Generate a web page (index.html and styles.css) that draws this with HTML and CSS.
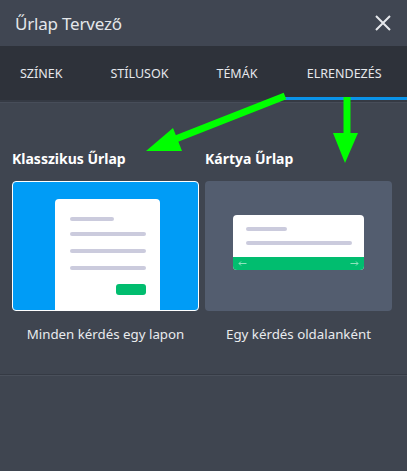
FILE: index.html
```html
<!DOCTYPE html>
<html lang="hu">
<head>
  <meta charset="UTF-8">
  <title>Űrlap Tervező</title>
  <meta name="viewport" content="width=device-width, initial-scale=1">
  <link rel="stylesheet" href="styles.css">
</head>
<body>

  <div class="panel">
    <header class="header">
      <h1 class="title">Űrlap Tervező</h1>
      <button class="close" aria-label="Bezárás">
        <svg width="16" height="16" viewBox="0 0 16 16"><path d="M1 1 L15 15 M15 1 L1 15" stroke="#e6e8ec" stroke-width="2" fill="none"/></svg>
      </button>
    </header>

    <nav class="tabs">
      <div class="tab">SZÍNEK</div>
      <div class="tab">STÍLUSOK</div>
      <div class="tab">TÉMÁK</div>
      <div class="tab active">ELRENDEZÉS</div>
    </nav>

    <section class="layouts">
      <div class="option">
        <h3 class="option-title">Klasszikus Űrlap</h3>
        <div class="preview classic">
          <div class="page">
            <span class="line short"></span>
            <span class="line"></span>
            <span class="line"></span>
            <span class="line"></span>
            <span class="submit"></span>
          </div>
        </div>
        <p class="caption">Minden kérdés egy lapon</p>
      </div>

      <div class="option">
        <h3 class="option-title">Kártya Űrlap</h3>
        <div class="preview cards">
          <div class="mini-card">
            <div class="mini-body">
              <span class="line short"></span>
              <span class="line"></span>
            </div>
            <div class="mini-nav">
              <svg width="9" height="5" viewBox="0 0 9 5"><path d="M8.5 2.5 H1 M3 0.5 L1 2.5 L3 4.5" stroke="#8fe3bd" stroke-width="1" fill="none"/></svg>
              <svg width="9" height="5" viewBox="0 0 9 5"><path d="M0.5 2.5 H8 M6 0.5 L8 2.5 L6 4.5" stroke="#8fe3bd" stroke-width="1" fill="none"/></svg>
            </div>
          </div>
        </div>
        <p class="caption">Egy kérdés oldalanként</p>
      </div>
    </section>

    <div class="footer"></div>

    <svg class="arrows" width="407" height="471" viewBox="0 0 407 471">
      <line x1="285" y1="96" x2="168" y2="142" stroke="#00ff00" stroke-width="7"/>
      <polygon points="146,151 173,128 182,151" fill="#00ff00"/>
      <line x1="347" y1="97" x2="347" y2="136" stroke="#00ff00" stroke-width="7"/>
      <polygon points="333,133 358,133 345,163" fill="#00ff00"/>
    </svg>
  </div>

</body>
</html>
```

FILE: styles.css
```css
body { margin: 0; font-family: "Noto Sans", "Open Sans", sans-serif; background: #3f4550; color: #e9ebee; }
.panel { position: relative; width: 407px; height: 471px; overflow: hidden; background: #3f4550; }

.header { height: 46px; display: flex; align-items: center; justify-content: space-between; padding: 0 16px 0 15px; background: #404652; }
.title { margin: 0; font-size: 17px; font-weight: 400; color: #e4e6ea; letter-spacing: -0.2px; }
.close { background: none; border: none; padding: 0; margin: 0; display: flex; cursor: pointer; }

.tabs { display: flex; height: 51px; background: #2e323a; border-bottom: 3px solid #2e323a; box-shadow: 0 2px 0 #353a44, 0 3px 0 #474d59; }
.tab { padding: 3px 24px 0; display: flex; align-items: center; font-size: 12.5px; color: #e6e8ec; margin-bottom: -3px; border-bottom: 3px solid transparent; }
.tab:first-child { padding-left: 20px; }
.tab.active { border-bottom-color: #0a93e8; flex: 1; justify-content: center; padding: 3px 0 0; }

.layouts { display: grid; grid-template-columns: 187px 187px; gap: 6px; padding: 49px 15px 0 12px; }
.option-title { margin: 0 0 12px; font-size: 14px; font-weight: 700; color: #ffffff; height: 20px; line-height: 20px; }
.preview { height: 130px; border-radius: 4px; box-sizing: border-box; overflow: hidden; }
.caption { margin: 14px 0 0; text-align: center; font-size: 13.3px; color: #e9ebee; }

.classic { background: #009cf6; border: 1px solid #ffffff; display: flex; justify-content: center; padding-top: 17px; }
.page { width: 105px; margin-left: 4px; background: #ffffff; border-radius: 4px 4px 0 0; padding: 18px 14px 0 15px; box-sizing: border-box; display: flex; flex-direction: column; }
.line { display: block; height: 4px; border-radius: 2px; background: #cbcbdd; margin-bottom: 13px; }
.line.short { width: 44px; margin-bottom: 11px; }
.submit { display: block; width: 30px; height: 11px; border-radius: 3px; background: #01bd6f; align-self: flex-end; margin-top: 1px; }

.cards { background: #535d6f; display: flex; justify-content: center; padding-top: 34px; }
.mini-card { width: 131px; height: 55px; border-radius: 4px; overflow: hidden; background: #ffffff; display: flex; flex-direction: column; }
.mini-body { flex: 1; padding: 12px 12px 0 13px; }
.mini-body .line { margin-bottom: 10px; }
.mini-body .line.short { width: 41px; }
.mini-nav { height: 13px; background: #01bd6f; display: flex; align-items: center; justify-content: space-between; padding: 0 5px; }

.footer { margin-top: 31px; border-top: 1px solid #353a44; border-bottom: 1px solid #4a505b; }

.arrows { position: absolute; left: 0; top: 0; pointer-events: none; }
```
